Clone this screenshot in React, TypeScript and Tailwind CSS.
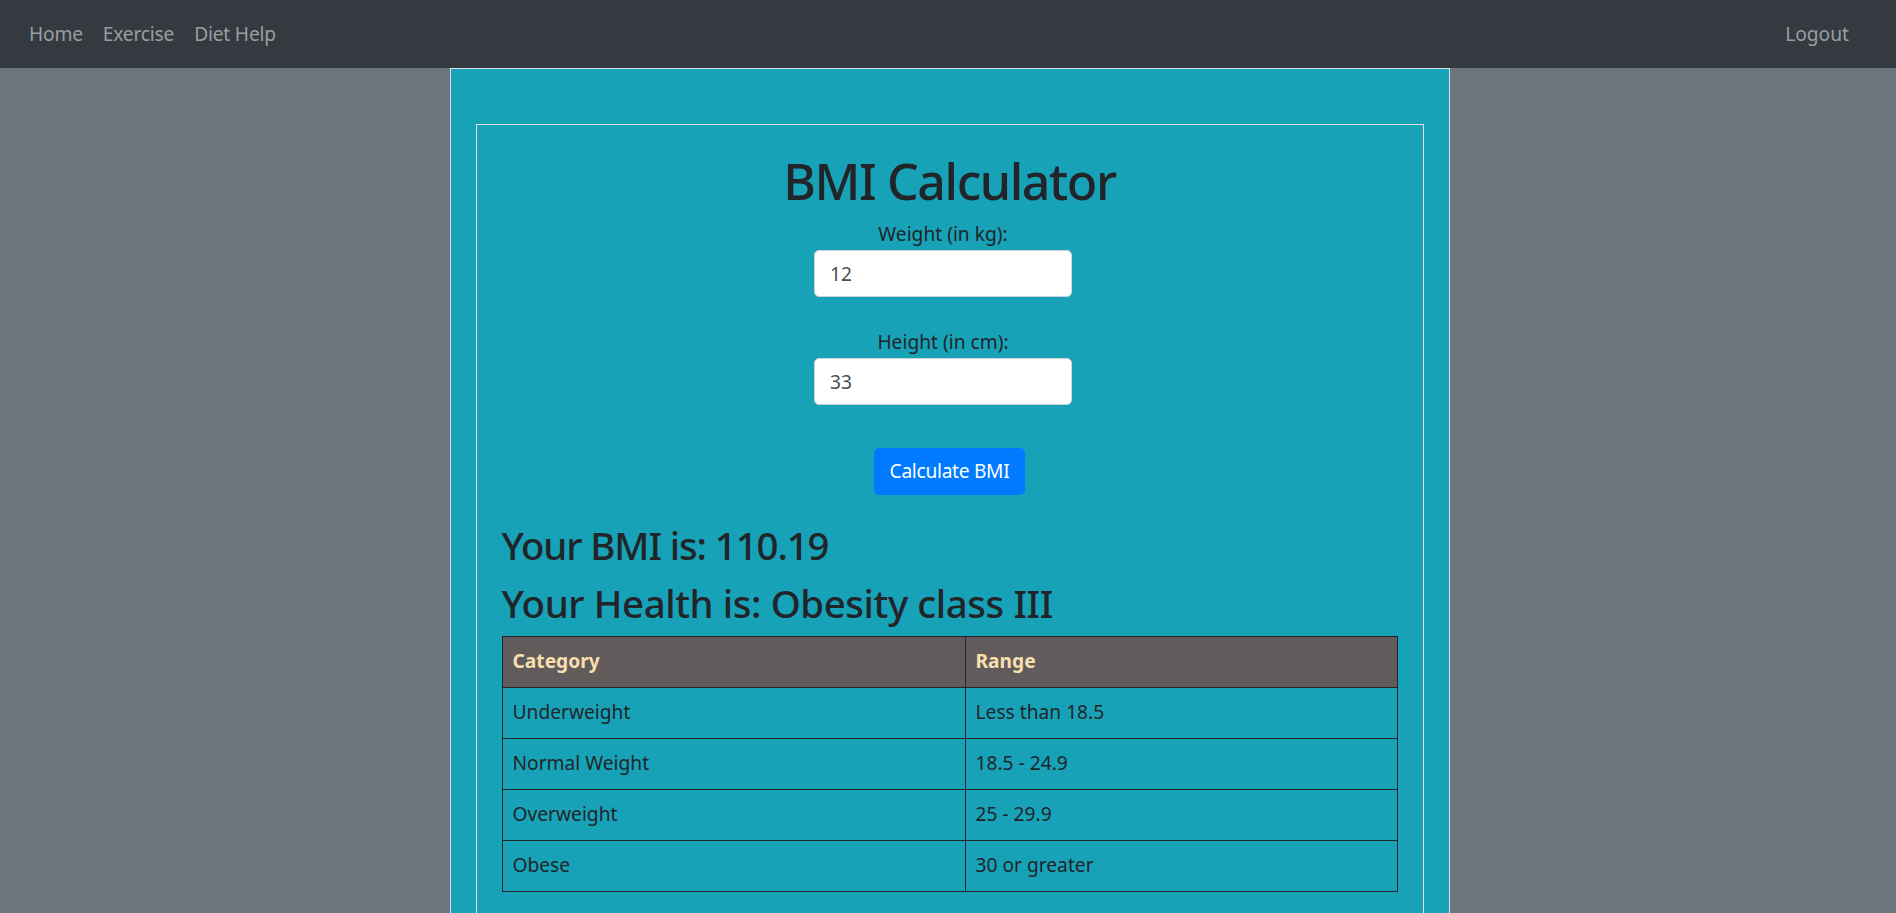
const rows = [
	["Underweight", "Less than 18.5"],
	["Normal Weight", "18.5 - 24.9"],
	["Overweight", "25 - 29.9"],
	["Obese", "30 or greater"],
];

export default function App() {
	return (
		<div className="min-h-screen bg-[#6c757d] font-['Noto_Sans','Open_Sans',sans-serif] text-[#212529]">
			<nav className="h-[68px] bg-[#343a40] flex items-center justify-between px-[19px] text-[19.2px] text-[#9a9da0]">
				<ul className="flex tracking-[-0.2px]">
					<li className="px-[10px]">Home</li>
					<li className="px-[10px]">Exercise</li>
					<li className="px-[10px]">Diet Help</li>
				</ul>
				<div className="px-[10px] mr-[18px]">Logout</div>
			</nav>

			<div className="flex justify-center pl-[3px]">
				<div className="w-[1000px] bg-[#17a2b8] border border-[#dee2e6] px-[25px] pt-[55px] pb-[40px]">
					<div className="border border-[#dee2e6] px-[25px] pt-[26px] pb-[30px]">
						<h1 className="text-center text-[50px] leading-[1.2] font-medium tracking-[-1.4px] mb-[9px]">BMI Calculator</h1>

						<form className="flex flex-col items-center text-[19.2px]" onSubmit={(e) => e.preventDefault()}>
							<div className="flex flex-col items-center pr-[13px]">
								<label className="leading-[1.5]">Weight (in kg):</label>
								<input
									className="w-[258px] h-[47px] mt-[1px] bg-white border border-[#ced4da] rounded-[5px] px-[15px] text-[#495057] outline-none"
									defaultValue="12"
								/>
								<label className="leading-[1.5] mt-[31px]">Height (in cm):</label>
								<input
									className="w-[258px] h-[47px] mt-[1px] bg-white border border-[#ced4da] rounded-[5px] px-[15px] text-[#495057] outline-none"
									defaultValue="33"
								/>
							</div>
							<button className="mt-[43px] h-[47px] px-[16px] bg-[#007bff] text-white rounded-[5px] tracking-[-0.3px]">Calculate BMI</button>
						</form>

						<h2 className="text-[38.4px] leading-[1.2] font-medium tracking-[-1.1px] mt-[27px]">Your BMI is: 110.19</h2>
						<h2 className="text-[38.4px] leading-[1.2] font-medium tracking-[-0.4px] mt-[12px]">Your Health is: Obesity class III</h2>

						<table className="w-full mt-[10px] border-collapse border border-[#212529] text-[19.2px]">
							<thead>
								<tr className="bg-[#625b5b] text-[#f8dfae] h-[51px]">
									<th className="w-[463px] text-left font-bold px-[10px] border border-[#212529]">Category</th>
									<th className="text-left font-bold px-[10px] border border-[#212529]">Range</th>
								</tr>
							</thead>
							<tbody>
								{rows.map(([cat, range]) => (
									<tr key={cat} className="h-[51px]">
										<td className="px-[10px] border border-[#212529]">{cat}</td>
										<td className="px-[10px] border border-[#212529]">{range}</td>
									</tr>
								))}
							</tbody>
						</table>
					</div>
				</div>
			</div>
		</div>
	);
}
